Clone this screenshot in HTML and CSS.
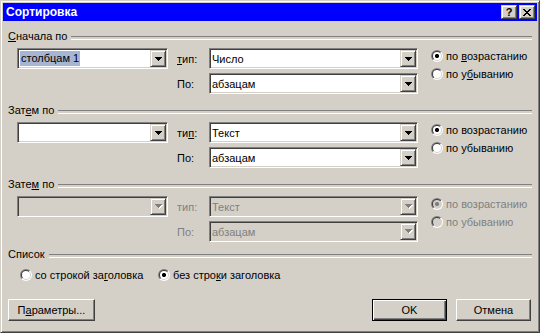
FILE: index.html
```html
<!DOCTYPE html>
<html lang="ru">
  <head>
    <meta charset="UTF-8" />
    <title>Сортировка</title>
    <link rel="stylesheet" href="styles.css">
  </head>
  <body>
    <div class="window">
      <div class="titlebar">
        <span class="title">Сортировка</span>
        <span class="cap-btn help">?</span>
        <span class="cap-btn close">
          <svg width="8" height="7" viewBox="0 0 8 7"><path d="M0 0h2v1H0zM6 0h2v1H6zM1 1h2v1H1zM5 1h2v1H5zM2 2h4v1H2zM3 3h2v1H3zM2 4h4v1H2zM1 5h2v1H1zM5 5h2v1H5zM0 6h2v1H0zM6 6h2v1H6z" fill="#000"/></svg>
        </span>
      </div>

      <div class="client">
        <!-- первый ключ -->
        <div class="group">
          <div class="group-head"><span><u>С</u>начала по</span></div>
          <div class="group-body">
            <div class="combo key">
              <span class="combo-text"><span class="sel">столбцам 1</span></span>
              <span class="drop"><svg width="7" height="4" viewBox="0 0 7 4"><path d="M0 0h7v1H0zM1 1h5v1H1zM2 2h3v1H2zM3 3h1v1H3z" fill="#000"/></svg></span>
            </div>
            <div class="fields">
              <span class="lbl"><u>т</u>ип:</span>
              <div class="combo">
                <span class="combo-text">Число</span>
                <span class="drop"><svg width="7" height="4" viewBox="0 0 7 4"><path d="M0 0h7v1H0zM1 1h5v1H1zM2 2h3v1H2zM3 3h1v1H3z" fill="#000"/></svg></span>
              </div>
              <span class="lbl">По:</span>
              <div class="combo">
                <span class="combo-text">абзацам</span>
                <span class="drop"><svg width="7" height="4" viewBox="0 0 7 4"><path d="M0 0h7v1H0zM1 1h5v1H1zM2 2h3v1H2zM3 3h1v1H3z" fill="#000"/></svg></span>
              </div>
            </div>
            <div class="radios">
              <span class="radio"><span class="dot checked"></span><span>по <u>в</u>озрастанию</span></span>
              <span class="radio"><span class="dot"></span><span>по у<u>б</u>ыванию</span></span>
            </div>
          </div>
        </div>

        <!-- второй ключ -->
        <div class="group">
          <div class="group-head"><span>Зат<u>е</u>м по</span></div>
          <div class="group-body">
            <div class="combo key">
              <span class="combo-text"></span>
              <span class="drop"><svg width="7" height="4" viewBox="0 0 7 4"><path d="M0 0h7v1H0zM1 1h5v1H1zM2 2h3v1H2zM3 3h1v1H3z" fill="#000"/></svg></span>
            </div>
            <div class="fields">
              <span class="lbl">ти<u>п</u>:</span>
              <div class="combo">
                <span class="combo-text">Текст</span>
                <span class="drop"><svg width="7" height="4" viewBox="0 0 7 4"><path d="M0 0h7v1H0zM1 1h5v1H1zM2 2h3v1H2zM3 3h1v1H3z" fill="#000"/></svg></span>
              </div>
              <span class="lbl">По:</span>
              <div class="combo">
                <span class="combo-text">абзацам</span>
                <span class="drop"><svg width="7" height="4" viewBox="0 0 7 4"><path d="M0 0h7v1H0zM1 1h5v1H1zM2 2h3v1H2zM3 3h1v1H3z" fill="#000"/></svg></span>
              </div>
            </div>
            <div class="radios">
              <span class="radio"><span class="dot checked"></span><span>по возрастанию</span></span>
              <span class="radio"><span class="dot"></span><span>по убыванию</span></span>
            </div>
          </div>
        </div>

        <!-- третий ключ, недоступен -->
        <div class="group last disabled">
          <div class="group-head"><span>Зате<u>м</u> по</span></div>
          <div class="group-body">
            <div class="combo key">
              <span class="combo-text"></span>
              <span class="drop"><svg width="8" height="5" viewBox="0 0 8 5"><path d="M1 1h7v1H1zM2 2h5v1H2zM3 3h3v1H3zM4 4h1v1H4z" fill="#fff"/><path d="M0 0h7v1H0zM1 1h5v1H1zM2 2h3v1H2zM3 3h1v1H3z" fill="#808080"/></svg></span>
            </div>
            <div class="fields">
              <span class="lbl">тип:</span>
              <div class="combo">
                <span class="combo-text">Текст</span>
                <span class="drop"><svg width="8" height="5" viewBox="0 0 8 5"><path d="M1 1h7v1H1zM2 2h5v1H2zM3 3h3v1H3zM4 4h1v1H4z" fill="#fff"/><path d="M0 0h7v1H0zM1 1h5v1H1zM2 2h3v1H2zM3 3h1v1H3z" fill="#808080"/></svg></span>
              </div>
              <span class="lbl">По:</span>
              <div class="combo">
                <span class="combo-text">абзацам</span>
                <span class="drop"><svg width="8" height="5" viewBox="0 0 8 5"><path d="M1 1h7v1H1zM2 2h5v1H2zM3 3h3v1H3zM4 4h1v1H4z" fill="#fff"/><path d="M0 0h7v1H0zM1 1h5v1H1zM2 2h3v1H2zM3 3h1v1H3z" fill="#808080"/></svg></span>
              </div>
            </div>
            <div class="radios">
              <span class="radio"><span class="dot checked"></span><span>по возрастанию</span></span>
              <span class="radio"><span class="dot"></span><span>по убыванию</span></span>
            </div>
          </div>
        </div>

        <!-- список -->
        <div class="group-head"><span>Список</span></div>
        <div class="list-radios">
          <span class="radio first"><span class="dot"></span><span>со строкой за<u>г</u>оловка</span></span>
          <span class="radio"><span class="dot checked"></span><span>без стро<u>к</u>и заголовка</span></span>
        </div>

        <div class="buttons">
          <span class="btn params"><span>П<u>а</u>раметры...</span></span>
          <span class="btn default">OK</span>
          <span class="btn">Отмена</span>
        </div>
      </div>
    </div>
  </body>
</html>
```

FILE: styles.css
```css
* {
  box-sizing: border-box;
}
body {
  margin: 0;
  font-family: "Liberation Sans", Arial, sans-serif;
  font-size: 11px;
  color: #000;
  background: #d4d0c8;
}
u {
  text-underline-offset: 1px;
}

.window {
  width: 540px;
  height: 333px;
  display: flex;
  flex-direction: column;
  padding: 2px;
  background: #d4d0c8;
  border: 1px solid;
  border-color: #d4d0c8 #404040 #404040 #d4d0c8;
  box-shadow: inset 1px 1px #fff, inset -1px -1px #808080;
}

/* заголовок окна */
.titlebar {
  height: 18px;
  display: flex;
  align-items: center;
  gap: 2px;
  padding: 0 2px 0 3px;
  background: #0000ff;
}
.title {
  flex: 1;
  color: #fff;
  font-weight: bold;
  font-size: 12px;
}
.cap-btn {
  width: 16px;
  height: 14px;
  display: flex;
  align-items: center;
  justify-content: center;
  background: #d4d0c8;
  border: 1px solid;
  border-color: #d4d0c8 #404040 #404040 #d4d0c8;
  box-shadow: inset 1px 1px #fff, inset -1px -1px #808080;
  font-weight: bold;
  font-size: 11px;
  line-height: 12px;
}

.client {
  flex: 1;
  padding: 9px 5px 0 5px;
}

/* группы */
.group {
  margin-bottom: 10px;
}
.group.last {
  margin-bottom: 6px;
}
.group-head {
  height: 13px;
  display: flex;
  align-items: center;
  gap: 4px;
  line-height: 13px;
  white-space: nowrap;
}
.group-head::after {
  content: "";
  flex: 1;
  height: 2px;
  margin-top: 2px;
  border-top: 1px solid #808080;
  border-bottom: 1px solid #fff;
}
.group-body {
  display: flex;
  align-items: flex-start;
  margin-top: 5px;
  padding-left: 9px;
}

/* выпадающие списки */
.combo {
  height: 21px;
  display: flex;
  padding: 1px;
  background: #fff;
  border: 1px solid;
  border-color: #808080 #fff #fff #808080;
  box-shadow: inset 1px 1px #404040, inset -1px -1px #d4d0c8;
}
.combo.key {
  width: 151px;
  flex: none;
}
.combo-text {
  flex: 1;
  display: flex;
  align-items: center;
  padding-left: 1px;
  white-space: nowrap;
}
.sel {
  height: 15px;
  line-height: 15px;
  padding: 0 1px;
  background: #a6b5d4;
}
.drop {
  width: 16px;
  height: 17px;
  flex: none;
  display: flex;
  align-items: center;
  justify-content: center;
  padding-left: 1px;
  background: #d4d0c8;
  border: 1px solid;
  border-color: #d4d0c8 #404040 #404040 #d4d0c8;
  box-shadow: inset 1px 1px #fff, inset -1px -1px #808080;
}

.fields {
  display: grid;
  grid-template-columns: 32px 209px;
  grid-auto-rows: 21px;
  row-gap: 4px;
  align-items: center;
  margin-left: 9px;
}

/* переключатели */
.radios {
  display: flex;
  flex-direction: column;
  margin: -1px 0 0 13px;
}
.radio {
  height: 18px;
  display: flex;
  align-items: center;
  gap: 3px;
  white-space: nowrap;
}
.dot {
  width: 12px;
  height: 12px;
  flex: none;
  position: relative;
  border-radius: 50%;
  background: linear-gradient(135deg, #808080 50%, #fff 50%);
}
.dot::before {
  content: "";
  position: absolute;
  inset: 1px;
  border-radius: 50%;
  background: linear-gradient(135deg, #404040 50%, #d4d0c8 50%);
}
.dot::after {
  content: "";
  position: absolute;
  inset: 2px;
  border-radius: 50%;
  background: #fff;
}
.dot.checked::after {
  background: radial-gradient(circle, #000 0 2px, #fff 2.2px);
}

/* недоступная группа */
.disabled .group-body {
  color: #808080;
}
.disabled .combo {
  background: #d4d0c8;
}
.disabled .dot::after {
  background: #d4d0c8;
}
.disabled .dot.checked::after {
  background: radial-gradient(circle, #808080 0 2px, #d4d0c8 2.2px);
}

.list-radios {
  display: flex;
  margin-top: 7px;
  padding-left: 12px;
}
.list-radios .radio {
  height: 13px;
}
.list-radios .radio.first {
  width: 138px;
}

/* кнопки */
.buttons {
  display: flex;
  gap: 9px;
  margin-top: 18px;
  padding-right: 1px;
}
.btn {
  width: 75px;
  height: 22px;
  display: flex;
  align-items: center;
  justify-content: center;
  background: #d4d0c8;
  border: 1px solid;
  border-color: #fff #404040 #404040 #fff;
  box-shadow: inset -1px -1px #808080;
}
.btn.params {
  width: 87px;
  margin-right: auto;
}
.btn.default {
  border-color: #000;
  box-shadow: inset 1px 1px #fff, inset -1px -1px #404040, inset -2px -2px #808080;
}
```
